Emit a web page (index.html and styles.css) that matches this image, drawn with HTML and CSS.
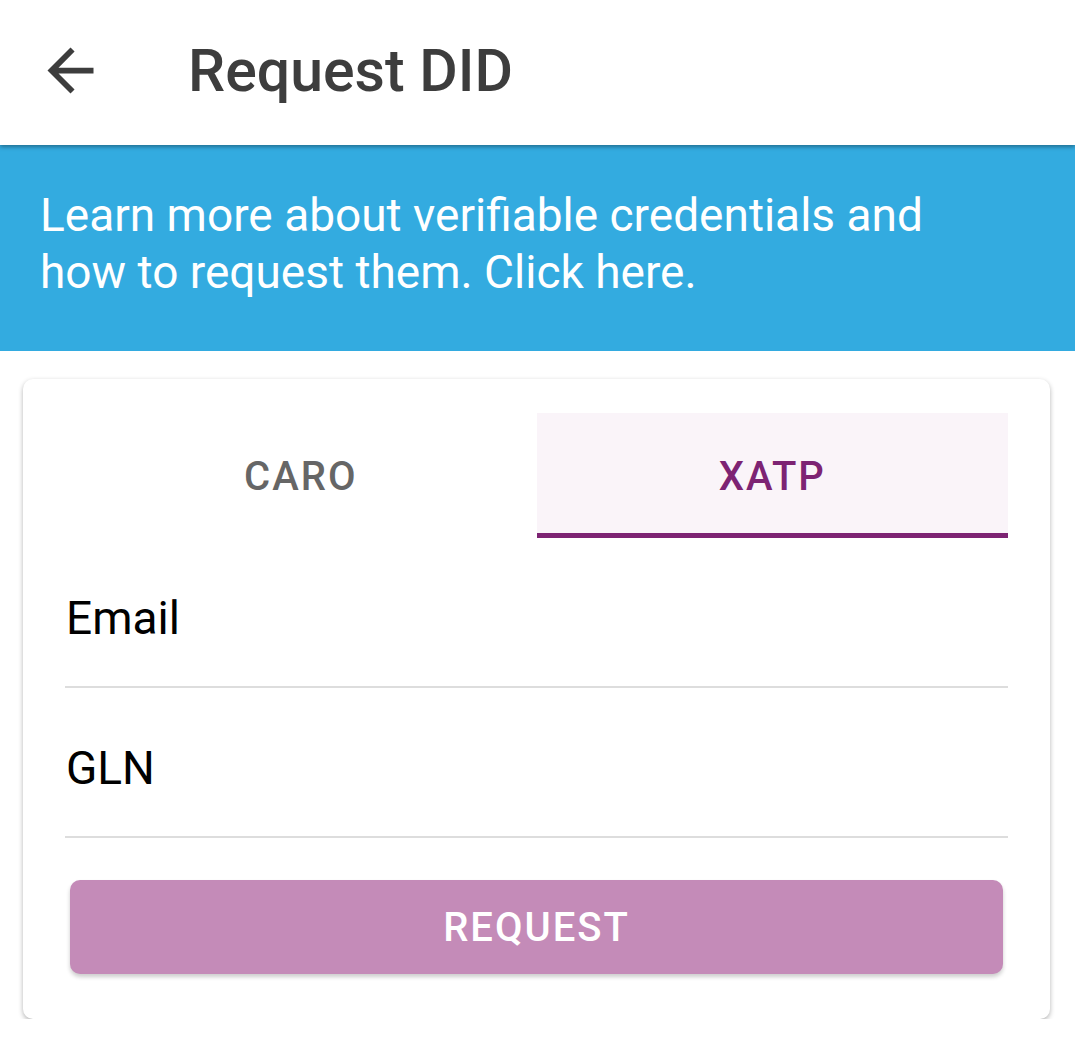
FILE: index.html
```html
<!DOCTYPE html>
<html lang="en">
<head>
    <meta charset="UTF-8">
    <meta name="viewport" content="width=device-width, initial-scale=1.0">
    <title>Request DID</title>
    <link rel="stylesheet" href="styles.css">
</head>
<body>
    <header class="topbar">
        <button class="back" aria-label="Back">
            <svg viewBox="0 0 24 24" width="69" height="69"><path d="M20 11H7.83l5.59-5.59L12 4l-8 8 8 8 1.41-1.41L7.83 13H20v-2z" fill="currentColor"/></svg>
        </button>
        <h1>Request DID</h1>
    </header>
    <div class="info">
        Learn more about verifiable credentials and how to request them. Click here.
    </div>
    <div class="card">
        <div class="tabs">
            <div class="tab">CARO</div>
            <div class="tab active">XATP</div>
        </div>
        <div class="field">
            <span class="label">Email</span>
        </div>
        <div class="field">
            <span class="label">GLN</span>
        </div>
        <button class="submit">REQUEST</button>
    </div>
</body>
</html>
```

FILE: styles.css
```css
body {
    margin: 0;
    background: #ffffff;
    font-family: Roboto, "Noto Sans", sans-serif;
    color: #000000;
}
.topbar {
    position: relative;
    z-index: 2;
    height: 145px;
    display: flex;
    align-items: center;
    padding-bottom: 4px;
    box-sizing: border-box;
    background: #ffffff;
    box-shadow: 0 2px 4px rgba(0, 0, 0, 0.35);
}
.back {
    border: none;
    background: none;
    padding: 0;
    margin-left: 36px;
    width: 69px;
    height: 69px;
    color: #3d3d3d;
}
.back svg {
    display: block;
}
.topbar h1 {
    margin: 0 0 0 83px;
    font-size: 59px;
    font-weight: 500;
    color: #3d3d3d;
}
.info {
    background: #33abe0;
    color: #ffffff;
    font-size: 46px;
    line-height: 57px;
    padding: 42px 110px 50px 40px;
    height: 114px;
}
.card {
    margin: 28px 25px 0 23px;
    padding: 34px 42px 45px 42px;
    background: #ffffff;
    border-radius: 10px;
    box-shadow: 0 2px 5px rgba(0, 0, 0, 0.3);
}
.tabs {
    display: flex;
}
.tab {
    flex: 1;
    height: 125px;
    padding-top: 6px;
    box-sizing: border-box;
    display: flex;
    align-items: center;
    justify-content: center;
    font-size: 40px;
    font-weight: 500;
    letter-spacing: 2px;
    color: #666666;
    border-bottom: 5px solid transparent;
}
.tab.active {
    background: #faf4f9;
    color: #7d2373;
    border-bottom-color: #7d2373;
}
.field {
    height: 150px;
    border-bottom: 2px solid #dddddd;
    display: flex;
    align-items: center;
    padding-top: 12px;
    box-sizing: border-box;
    padding-left: 1px;
}
.label {
    font-size: 46px;
}
.submit {
    display: block;
    width: calc(100% - 10px);
    margin: 42px 5px 0 5px;
    height: 94px;
    border: none;
    border-radius: 10px;
    background: #c48bb8;
    color: #ffffff;
    font-family: Roboto, sans-serif;
    font-size: 40px;
    font-weight: 500;
    letter-spacing: 2px;
    box-shadow: 0 3px 4px rgba(0, 0, 0, 0.2);
}
```
